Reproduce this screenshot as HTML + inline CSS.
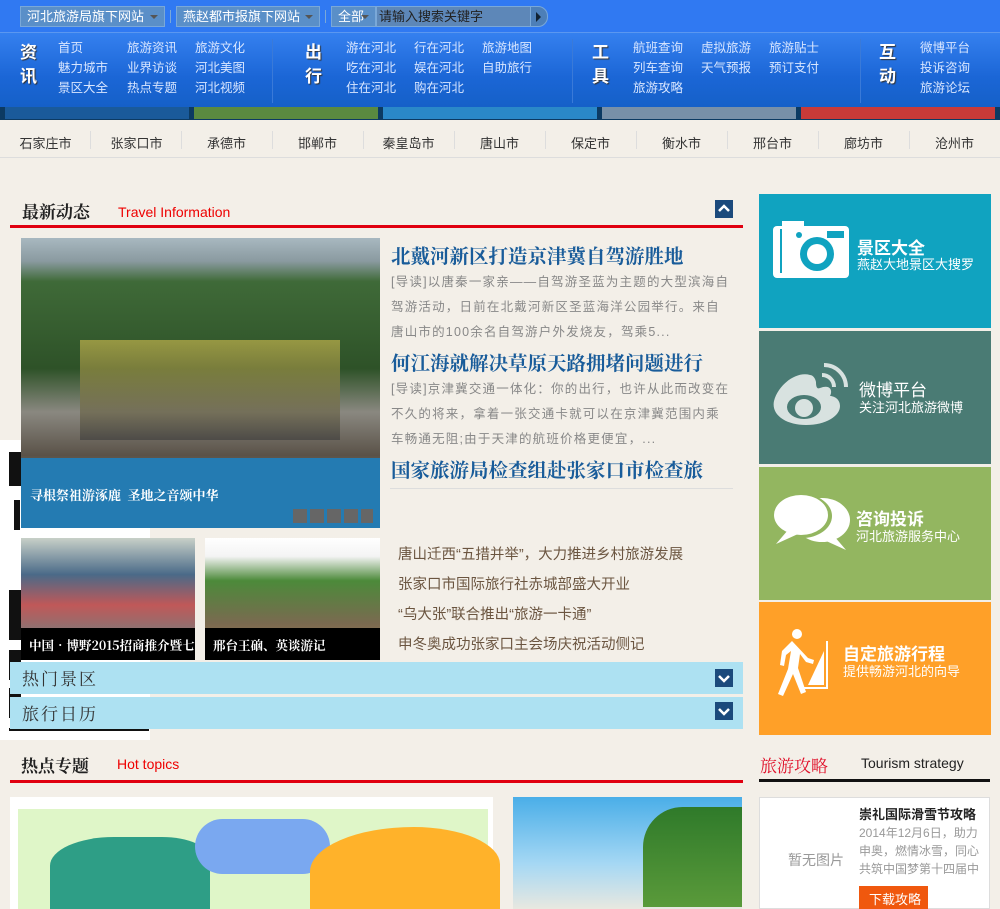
<!DOCTYPE html>
<html><head><meta charset="utf-8"><style>
*{margin:0;padding:0;box-sizing:border-box}
body{width:1000px;height:909px;overflow:hidden;background:#f3efe8;font-family:"Liberation Sans","Noto Sans CJK SC",sans-serif;position:relative}
.a{position:absolute}
.top{left:0;top:0;width:1000px;height:32px;background:#3079f2}
.sel{top:6px;height:21px;background:#5a8fc8;border:1px solid #7aa8d8;color:#fff;font-size:13px;line-height:19px;padding-left:6px}
.sel i{position:absolute;right:6px;top:8px;border:4px solid transparent;border-top-color:#555;}
.nav{left:0;top:32px;width:1000px;height:75px;background:linear-gradient(#3580ef,#1b66d6 60%,#1560c8);border-top:1px solid #5b97f0}
.nav .h{color:#fff;font-size:17px;font-weight:bold;line-height:24px;width:20px;text-shadow:1px 1px 1px #333}
.nav .l{color:#d8e6ff;font-size:12.5px;line-height:20px}
.vs{width:1px;background:#3a7ad8;top:6px;height:64px}
.strip{left:0;top:107px;width:1000px;height:13px;background:#0c3a62}
.city{left:0;top:120px;width:1000px;height:38px;border-bottom:1px solid #ddd;font-size:13px;color:#333}
.city span{position:absolute;top:13px;width:91px;text-align:center}
.city b{position:absolute;top:11px;width:1px;height:18px;background:#ddd}
.hd{font-family:"Noto Serif CJK SC",serif;font-size:17px;font-weight:bold;color:#222}
.hl{color:#195c9a;font-size:19.5px;font-weight:bold;font-family:"Noto Serif CJK SC",serif;left:391px;white-space:nowrap}
.sm{left:391px;width:340px;color:#888;font-size:12.5px;line-height:25px;letter-spacing:1.2px}
.li{left:398px;color:#6b5540;font-size:14.5px}
.bar{left:10px;width:733px;height:32px;background:#ade1f2}
.bar .t{position:absolute;left:12px;top:3px;font-family:"Noto Serif CJK SC",serif;font-size:17px;color:#333;letter-spacing:2px}
.btn{width:18px;height:18px;background:#1b4a7c}
.btn svg{display:block}
.tile{left:759px;width:232px;color:#fff}
.tile .t1{position:absolute;font-size:17px;font-weight:bold}
.tile .t2{position:absolute;font-size:13px}
.q{position:absolute;background:#111}
</style></head><body>
<div class="a top"></div>
<div class="a sel" style="left:20px;width:145px">河北旅游局旗下网站<i></i></div>
<div class="a" style="left:170px;top:10px;width:1px;height:13px;background:#7aa8d8"></div>
<div class="a sel" style="left:176px;width:144px">燕赵都市报旗下网站<i></i></div>
<div class="a" style="left:325px;top:10px;width:1px;height:13px;background:#7aa8d8"></div>
<div class="a sel" style="left:331px;width:45px">全部<i></i></div>
<div class="a sel" style="left:376px;width:155px;background:#5d87b8;color:#222;padding-left:2px">请输入搜索关键字</div>
<div class="a" style="left:530px;top:6px;width:18px;height:21px;border-radius:0 10px 10px 0;background:#4d7fb8;border:1px solid #7aa8d8"><div style="position:absolute;left:5px;top:5px;border:5px solid transparent;border-left-color:#123;border-right:0"></div></div>

<div class="a nav">
<div class="a h" style="left:20px;top:8px">资<br>讯</div>
<div class="a l" style="left:58px;top:5px">首页<br>魅力城市<br>景区大全</div>
<div class="a l" style="left:127px;top:5px">旅游资讯<br>业界访谈<br>热点专题</div>
<div class="a l" style="left:195px;top:5px">旅游文化<br>河北美图<br>河北视频</div>
<div class="a vs" style="left:272px"></div>
<div class="a h" style="left:305px;top:8px">出<br>行</div>
<div class="a l" style="left:346px;top:5px">游在河北<br>吃在河北<br>住在河北</div>
<div class="a l" style="left:414px;top:5px">行在河北<br>娱在河北<br>购在河北</div>
<div class="a l" style="left:482px;top:5px">旅游地图<br>自助旅行</div>
<div class="a vs" style="left:572px"></div>
<div class="a h" style="left:592px;top:8px">工<br>具</div>
<div class="a l" style="left:633px;top:5px">航班查询<br>列车查询<br>旅游攻略</div>
<div class="a l" style="left:701px;top:5px">虚拟旅游<br>天气预报</div>
<div class="a l" style="left:769px;top:5px">旅游贴士<br>预订支付</div>
<div class="a vs" style="left:860px"></div>
<div class="a h" style="left:879px;top:8px">互<br>动</div>
<div class="a l" style="left:920px;top:5px">微博平台<br>投诉咨询<br>旅游论坛</div>
</div>
<div class="a strip">
<div class="a" style="left:5px;top:0;width:184px;height:12px;background:#1a5a9a"></div>
<div class="a" style="left:194px;top:0;width:184px;height:12px;background:#5a8a40"></div>
<div class="a" style="left:383px;top:0;width:214px;height:12px;background:#2a88c8"></div>
<div class="a" style="left:602px;top:0;width:194px;height:12px;background:#7890a8"></div>
<div class="a" style="left:801px;top:0;width:194px;height:12px;background:#c83a38"></div>
</div>
<div class="a city">
<span style="left:0">石家庄市</span><b style="left:90px"></b>
<span style="left:91px">张家口市</span><b style="left:181px"></b>
<span style="left:181px">承德市</span><b style="left:272px"></b>
<span style="left:272px">邯郸市</span><b style="left:363px"></b>
<span style="left:363px">秦皇岛市</span><b style="left:454px"></b>
<span style="left:454px">唐山市</span><b style="left:545px"></b>
<span style="left:545px">保定市</span><b style="left:636px"></b>
<span style="left:636px">衡水市</span><b style="left:727px"></b>
<span style="left:727px">邢台市</span><b style="left:818px"></b>
<span style="left:818px">廊坊市</span><b style="left:909px"></b>
<span style="left:909px">沧州市</span>
</div>

<!-- QR -->
<div class="a" style="left:0;top:440px;width:150px;height:300px;background:#fff">
<div class="q" style="left:9px;top:12px;width:12px;height:34px"></div>
<div class="q" style="left:14px;top:60px;width:6px;height:30px"></div>
<div class="q" style="left:9px;top:150px;width:12px;height:50px"></div>
<div class="q" style="left:9px;top:210px;width:12px;height:30px"></div>
<div class="q" style="left:9px;top:248px;width:12px;height:30px"></div>
<div class="q" style="left:9px;top:288px;width:140px;height:3px"></div>
</div>

<div class="a hd" style="left:22px;top:198px">最新动态</div>
<div class="a" style="left:118px;top:204px;color:#e00;font-size:14px">Travel Information</div>
<div class="a btn" style="left:715px;top:200px"><svg width="18" height="18"><path d="M4 11l5-5 5 5" stroke="#fff" stroke-width="2.5" fill="none"/></svg></div>
<div class="a" style="left:10px;top:225px;width:733px;height:3px;background:#e00010"></div>

<div class="a" style="left:21px;top:238px;width:359px;height:290px;background:linear-gradient(#a8b8c0 0,#8a9aa0 8%,#3f6a38 15%,#2e5228 45%,#8a8880 60%,#5a5248 75%,#c2b8a8 100%)"></div>
<div class="a" style="left:80px;top:340px;width:260px;height:100px;background:linear-gradient(#d8c050,#3a3a3a);opacity:.6"></div>
<div class="a" style="left:21px;top:458px;width:359px;height:70px;background:#247bb2"></div>
<div class="a" style="left:30px;top:485px;color:#fff;font-size:13px;font-weight:bold;font-family:'Noto Serif CJK SC',serif">寻根祭祖游涿鹿&nbsp;&nbsp;圣地之音颂中华</div>
<div class="a" style="left:293px;top:509px;width:80px;height:14px;background:repeating-linear-gradient(90deg,#666 0 14px,transparent 14px 17px)"></div>

<div class="a hl" style="top:241px">北戴河新区打造京津冀自驾游胜地</div>
<div class="a sm" style="top:270px">[导读]以唐秦一家亲——自驾游圣蓝为主题的大型滨海自驾游活动，日前在北戴河新区圣蓝海洋公园举行。来自唐山市的100余名自驾游户外发烧友，驾乘5...</div>
<div class="a hl" style="top:348px">何江海就解决草原天路拥堵问题进行</div>
<div class="a sm" style="top:377px">[导读]京津冀交通一体化：你的出行，也许从此而改变在不久的将来，拿着一张交通卡就可以在京津冀范围内乘车畅通无阻;由于天津的航班价格更便宜，...</div>
<div class="a hl" style="top:455px">国家旅游局检查组赴张家口市检查旅</div>
<div class="a" style="left:390px;top:488px;width:343px;height:1px;background:#ddd"></div>

<div class="a" style="left:21px;top:538px;width:174px;height:122px;background:linear-gradient(#c8d0c8,#4a6a88 30%,#c05858 55%,#807878 80%)"></div>
<div class="a" style="left:21px;top:628px;width:174px;height:32px;background:#000;color:#fff;font-size:12.5px;font-weight:bold;padding:8px 0 0 8px;white-space:nowrap;overflow:hidden;font-family:'Noto Serif CJK SC',serif">中国•博野2015招商推介暨七</div>
<div class="a" style="left:205px;top:538px;width:175px;height:122px;background:linear-gradient(#fff 0,#f4f4f4 15%,#4c8a3a 35%,#7a6a50 70%,#a87858)"></div>
<div class="a" style="left:205px;top:628px;width:175px;height:32px;background:#000;color:#fff;font-size:12.5px;font-weight:bold;padding:8px 0 0 8px;font-family:'Noto Serif CJK SC',serif">邢台王硇、英谈游记</div>

<div class="a li" style="top:543px">唐山迁西“五措并举”，大力推进乡村旅游发展</div>
<div class="a li" style="top:573px">张家口市国际旅行社赤城部盛大开业</div>
<div class="a li" style="top:603px">“乌大张”联合推出“旅游一卡通”</div>
<div class="a li" style="top:633px">申冬奥成功张家口主会场庆祝活动侧记</div>

<div class="a bar" style="top:662px"><div class="t">热门景区</div><div class="a btn" style="left:705px;top:7px"><svg width="18" height="18"><path d="M4 7l5 5 5-5" stroke="#fff" stroke-width="2.5" fill="none"/></svg></div></div>
<div class="a bar" style="top:697px"><div class="t">旅行日历</div><div class="a btn" style="left:705px;top:5px"><svg width="18" height="18"><path d="M4 7l5 5 5-5" stroke="#fff" stroke-width="2.5" fill="none"/></svg></div></div>

<div class="a tile" style="top:194px;height:134px;background:#10a3c0">
<svg class="a" style="left:13px;top:27px" width="80" height="58"><rect x="1" y="5" width="76" height="52" rx="4" fill="#fff"/><rect x="10" y="0" width="22" height="8" fill="#fff"/><circle cx="45" cy="33" r="17" fill="#10a3c0"/><circle cx="45" cy="33" r="10" fill="#fff"/><circle cx="27" cy="14" r="3" fill="#10a3c0"/><rect x="55" y="10" width="17" height="7" fill="#10a3c0"/><rect x="8" y="8" width="2" height="44" fill="#10a3c0"/></svg>
<div class="t1" style="left:98px;top:40px">景区大全</div><div class="t2" style="left:98px;top:60px">燕赵大地景区大搜罗</div></div>
<div class="a tile" style="top:331px;height:133px;background:#4a7b74">
<svg class="a" style="left:13px;top:28px" width="80" height="70"><path d="M38 16C24 12 6 26 2 42c-3 14 12 24 32 24 20 0 34-9 34-19 0-7-6-10-10-10 3-6 0-12-10-8-4 2-4-4-4-6-1-5-4-7-6-7z" fill="#d8e2e0"/><ellipse cx="32" cy="48" rx="17" ry="12" fill="#4a7b74"/><circle cx="32" cy="49" r="9" fill="#d8e2e0"/><path d="M50 16a12 12 0 0 1 12 12M52 6a22 22 0 0 1 22 22" stroke="#d8e2e0" stroke-width="4" fill="none"/></svg>
<div class="t1" style="left:100px;top:45px;font-weight:normal">微博平台</div><div class="t2" style="left:100px;top:66px">关注河北旅游微博</div></div>
<div class="a tile" style="top:467px;height:133px;background:#93b660">
<svg class="a" style="left:13px;top:25px" width="82" height="60"><ellipse cx="50" cy="28" rx="28" ry="22" fill="#fff"/><path d="M62 44l12 14-22-10z" fill="#fff"/><ellipse cx="30" cy="24" rx="30" ry="22" fill="#93b660"/><ellipse cx="29" cy="23" rx="27" ry="20" fill="#fff"/><path d="M16 38l-12 14 22-10z" fill="#fff"/></svg>
<div class="t1" style="left:97px;top:38px">咨询投诉</div><div class="t2" style="left:97px;top:59px">河北旅游服务中心</div></div>
<div class="a tile" style="top:602px;height:133px;background:#ffa028">
<svg class="a" style="left:13px;top:25px" width="62" height="70"><circle cx="25" cy="7" r="5" fill="#fff"/><path d="M20 14l-10 10-2 14 4 1 2-11 5-4-3 18-10 25 5 2 10-22 8 20 5-2-8-24 2-14 6 8 7 2 1-4-6-2z" fill="#fff"/><path d="M55 14v47H32" stroke="#fff" stroke-width="2" fill="none"/><path d="M52 24v34H36z" fill="#fff"/></svg>
<div class="t1" style="left:84px;top:38px">自定旅游行程</div><div class="t2" style="left:84px;top:59px">提供畅游河北的向导</div></div>

<div class="a hd" style="left:21px;top:752px">热点专题</div>
<div class="a" style="left:117px;top:756px;color:#e00;font-size:14px">Hot topics</div>
<div class="a" style="left:10px;top:780px;width:733px;height:3px;background:#e00010"></div>
<div class="a" style="left:10px;top:797px;width:483px;height:112px;background:#fff"><div class="a" style="left:8px;top:12px;width:470px;height:100px;background:#dff6c8"></div><div class="a" style="left:40px;top:40px;width:160px;height:72px;background:#2e9e86;border-radius:40% 30% 0 0"></div><div class="a" style="left:185px;top:22px;width:135px;height:55px;background:#7aa8f0;border-radius:30px"></div><div class="a" style="left:300px;top:30px;width:190px;height:82px;background:#ffb22a;border-radius:60% 50% 0 0"></div></div>
<div class="a" style="left:513px;top:797px;width:229px;height:112px;background:linear-gradient(#4aaee8,#a6d8f4 60%,#e8e8e0)"><div class="a" style="left:130px;top:10px;width:99px;height:100px;background:linear-gradient(#2f7a2a,#5a9a3a);border-radius:40% 0 0 0"></div></div>

<div class="a" style="left:760px;top:752px;color:#e0102a;font-size:17px;font-family:'Noto Serif CJK SC',serif">旅游攻略</div>
<div class="a" style="left:861px;top:755px;color:#222;font-size:14px">Tourism strategy</div>
<div class="a" style="left:759px;top:779px;width:231px;height:3px;background:#111"></div>
<div class="a" style="left:759px;top:797px;width:231px;height:112px;background:#fff;border:1px solid #ddd"></div>
<div class="a" style="left:788px;top:850px;color:#999;font-size:14px">暂无图片</div>
<div class="a" style="left:859px;top:804px;color:#222;font-size:13px;font-weight:bold">崇礼国际滑雪节攻略</div>
<div class="a" style="left:859px;top:824px;width:122px;height:60px;overflow:hidden;color:#999;font-size:12px;line-height:18px">2014年12月6日，助力申奥，燃情冰雪，同心共筑中国梦第十四届中</div>
<div class="a" style="left:859px;top:886px;width:69px;height:23px;background:#f0580e;color:#fff;font-size:13px;padding:3px 0 0 10px">下载攻略</div>
</body></html>
